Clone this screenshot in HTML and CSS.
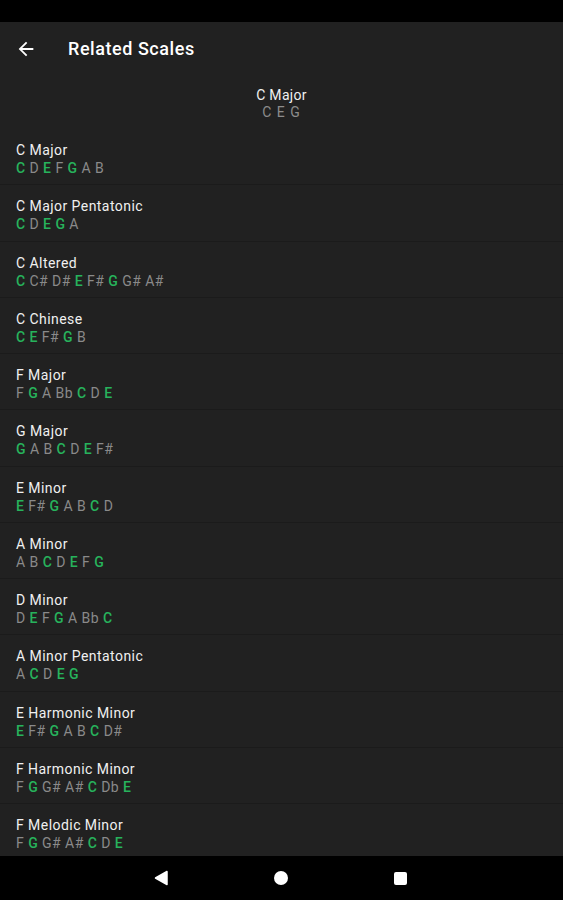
FILE: index.html
```html
<!DOCTYPE html>
<html lang="en">
<head>
<meta charset="UTF-8">
<title>Related Scales</title>
<link rel="stylesheet" href="styles.css">
</head>
<body>

<div class="screen">
  <div class="statusbar"></div>

  <div class="appbar">
    <svg class="back" viewBox="0 0 24 24" width="22" height="22">
      <path d="M20 11H7.83l5.59-5.59L12 4l-8 8 8 8 1.41-1.41L7.83 13H20v-2z" fill="#fff"/>
    </svg>
    <div class="title">Related Scales</div>
  </div>

  <div class="chord">
    <div class="chord-name">C Major</div>
    <div class="chord-notes">C E G</div>
  </div>

  <div class="list" id="list"></div>

  <div class="navbar">
    <svg class="nav-back" viewBox="0 0 14 16" width="14" height="16"><path d="M13 1.5v13L1.5 8z" fill="#fff" stroke="#fff" stroke-width="1.5" stroke-linejoin="round"/></svg>
    <div class="nav-home"></div>
    <div class="nav-recent"></div>
  </div>
</div>

<script>
const chord = ["C", "E", "G"];

const scales = [
  ["C Major", "C D E F G A B"],
  ["C Major Pentatonic", "C D E G A"],
  ["C Altered", "C C# D# E F# G G# A#"],
  ["C Chinese", "C E F# G B"],
  ["F Major", "F G A Bb C D E"],
  ["G Major", "G A B C D E F#"],
  ["E Minor", "E F# G A B C D"],
  ["A Minor", "A B C D E F G"],
  ["D Minor", "D E F G A Bb C"],
  ["A Minor Pentatonic", "A C D E G"],
  ["E Harmonic Minor", "E F# G A B C D#"],
  ["F Harmonic Minor", "F G G# A# C Db E"],
  ["F Melodic Minor", "F G G# A# C D E"]
];

let html = "";
for (let s of scales) {
  let notes = s[1].split(" ").map(n =>
    chord.includes(n) ? `<span class="on">${n}</span>` : `<span>${n}</span>`
  ).join(" ");
  html += `<div class="row"><div class="name">${s[0]}</div><div class="notes">${notes}</div></div>`;
}
document.getElementById("list").innerHTML = html;
</script>

</body>
</html>
```

FILE: styles.css
```css
body { margin:0; background:#000; font-family: Roboto, "Noto Sans", sans-serif; }
.screen { width:563px; height:900px; display:flex; flex-direction:column; background:#212121; overflow:hidden; }
.statusbar { height:22px; background:#000; flex:none; }
.appbar { height:53px; flex:none; display:flex; align-items:center; padding-left:15px; }
.back { display:block; }
.title { margin-left:31px; color:#fff; font-size:18px; font-weight:500; letter-spacing:0.55px; }
.chord { height:54px; flex:none; text-align:center; box-sizing:border-box; padding-top:11px; }
.chord-name { color:#f0f0f0; font-size:14px; line-height:18px; letter-spacing:0.3px; }
.chord-notes { color:#8c8c8c; font-size:14px; line-height:17px; letter-spacing:1px; }
.list { flex:1; overflow:hidden; }
.row { height:56.25px; box-sizing:border-box; padding:12px 16px 0; border-bottom:1px solid #1b1b1b; }
.name { color:#f0f0f0; font-size:14px; line-height:18px; letter-spacing:0.45px; }
.notes { color:#8a8a8a; font-size:14px; line-height:18px; letter-spacing:0.45px; }
.notes .on { color:#27b35c; font-weight:500; }
.navbar { height:44px; flex:none; background:#000; display:flex; align-items:center; justify-content:center; gap:106px; padding-right:2px; }
.nav-back { display:block; }
.nav-home { width:14px; height:14px; border-radius:50%; background:#fff; }
.nav-recent { width:13px; height:13px; border-radius:2px; background:#fff; }
```
